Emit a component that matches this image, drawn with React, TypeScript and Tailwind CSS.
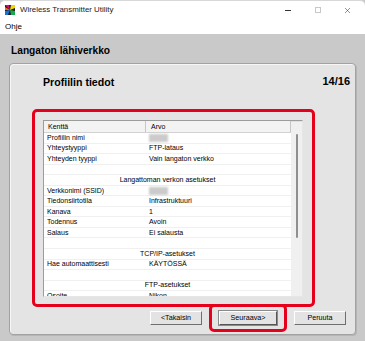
import { X } from "lucide-react";

type Row = { k?: string; v?: string; blur?: boolean; section?: string };

const rows: Row[] = [
  { k: "Profiilin nimi", blur: true },
  { k: "Yhteystyyppi", v: "FTP-lataus" },
  { k: "Yhteyden tyyppi", v: "Vain langaton verkko" },
  {},
  { section: "Langattoman verkon asetukset" },
  { k: "Verkkonimi (SSID)", blur: true },
  { k: "Tiedonsiirtotila", v: "Infrastruktuuri" },
  { k: "Kanava", v: "1" },
  { k: "Todennus", v: "Avoin" },
  { k: "Salaus", v: "Ei salausta" },
  {},
  { section: "TCP/IP-asetukset" },
  { k: "Hae automaattisesti", v: "KÄYTÖSSÄ" },
  {},
  { section: "FTP-asetukset" },
  { k: "Osoite", v: "Nikon" },
];

const AppIcon = () => (
  <svg width="10" height="10" viewBox="0 0 10 10">
    <rect width="10" height="10" fill="#1b1b1b" />
    <polygon points="0,0 4,0 5,5" fill="#e4007f" />
    <polygon points="6,0 10,0 10,3 5,5" fill="#f5d400" />
    <polygon points="10,6 10,10 6,10 5,5" fill="#19a94a" />
    <polygon points="0,10 0,6 5,5 3,10" fill="#1e6fd6" />
    <polygon points="0,2 0,5 5,5" fill="#ff6a00" />
  </svg>
);

const Btn = ({ label, primary }: { label: string; primary?: boolean }) => (
  <button
    className={
      "h-[14px] flex items-center justify-center bg-[#e3e3e3] text-[7.2px] text-black border-t border-l border-t-white border-l-white border-r border-b " +
      (primary
        ? "w-[58px] border-r-[#555] border-b-[#555] outline outline-1 outline-[#8a8a8a]"
        : "w-[52px] border-r-[#6e6e6e] border-b-[#6e6e6e]")
    }
  >
    {label}
  </button>
);

export default function App() {
  return (
    <div
      className="w-[365px] h-[341px] flex flex-col overflow-hidden bg-[#c9c9c9] text-black"
      style={{ fontFamily: '"Liberation Sans", Arial, sans-serif' }}
    >
      {/* title bar */}
      <div className="h-[19px] bg-white flex items-center pl-[5px] border-t border-[#d8d8d8] rounded-t-[5px]">
        <AppIcon />
        <span className="ml-[5px] text-[7.9px] text-[#1a1a1a]">Wireless Transmitter Utility</span>
        <div className="ml-auto flex items-center">
          <div className="w-[6px] h-px bg-[#333] mr-[24px]" />
          <div className="w-[6px] h-[6px] border border-[#c8c8c8] mr-[22px]" />
          <X size={9} strokeWidth={1.3} className="mr-[13px] text-[#222]" />
        </div>
      </div>
      {/* menu */}
      <div className="h-[15px] bg-white flex items-center pl-[5px] text-[8px]">Ohje</div>

      <div className="flex-1 flex flex-col px-[9px] pb-[6px]">
        <div className="h-[29px] pl-[2px] pt-[11px] text-[10.2px] font-bold leading-[12px]">
          Langaton lähiverkko
        </div>

        <div className="flex-1 bg-[#e4e4e4] border border-[#a2a2a2] rounded-[4px] shadow-[inset_1px_1px_0_#f6f6f6,1px_1px_0_#b5b5b5] flex flex-col">
          <div className="flex justify-between items-start pl-[33px] pr-[5px] pt-[11px] h-[45px]">
            <span className="text-[10.6px] font-bold leading-[12px] mt-[1px]">Profiilin tiedot</span>
            <span className="text-[11px] font-bold leading-[12px]">14/16</span>
          </div>

          {/* red highlight around list */}
          <div className="ml-[22px] w-[283px] h-[198px] border-[3px] border-[#e5001c] rounded-[5px] pt-[8px] pl-[8px]">
            <div className="w-[260px] h-[177px] bg-white flex border-t border-l border-[#9c9c9c] border-r border-r-[#e6e6e6] border-b border-b-[#e6e6e6] overflow-hidden">
              <div className="w-[247px] flex flex-col text-[7px] leading-[10px]">
                <div className="h-[12px] shrink-0 flex bg-[#f3f3f3] border-b border-[#d2d2d2] border-r border-r-[#c6c6c6]">
                  <div className="w-[102px] pl-[4px] border-r border-[#c6c6c6] flex items-center">Kenttä</div>
                  <div className="pl-[5px] flex items-center">Arvo</div>
                </div>
                {rows.map((r, i) => (
                  <div key={i} className="h-[10.55px] shrink-0 flex items-center border-b border-[#f0f0f0]">
                    {r.section ? (
                      <div className="w-full text-center">{r.section}</div>
                    ) : r.k ? (
                      <>
                        <div className="w-[102px] pl-[3px] whitespace-nowrap">{r.k}</div>
                        <div className="pl-[3px] whitespace-nowrap">
                          {r.blur ? (
                            <div className="w-[19px] h-[8px] bg-[#cbcbcb] blur-[0.8px]" />
                          ) : (
                            r.v
                          )}
                        </div>
                      </>
                    ) : null}
                  </div>
                ))}
              </div>
              {/* scrollbar */}
              <div className="flex-1 bg-[#f0f0f0] flex justify-center pt-[12px] border-t border-[#e0e0e0]">
                <div className="w-[2px] h-[104px] bg-[#8f8f8f] rounded-full" />
              </div>
            </div>
          </div>

          {/* buttons */}
          <div className="mt-[-3px] h-[28px] flex items-center gap-[7px] pl-[140px]">
            <Btn label="<Takaisin" />
            <div className="w-[78px] h-[28px] border-[3px] border-[#e5001c] rounded-[5px] flex items-center justify-center">
              <Btn label="Seuraava>" primary />
            </div>
            <Btn label="Peruuta" />
          </div>
        </div>
      </div>
    </div>
  );
}
